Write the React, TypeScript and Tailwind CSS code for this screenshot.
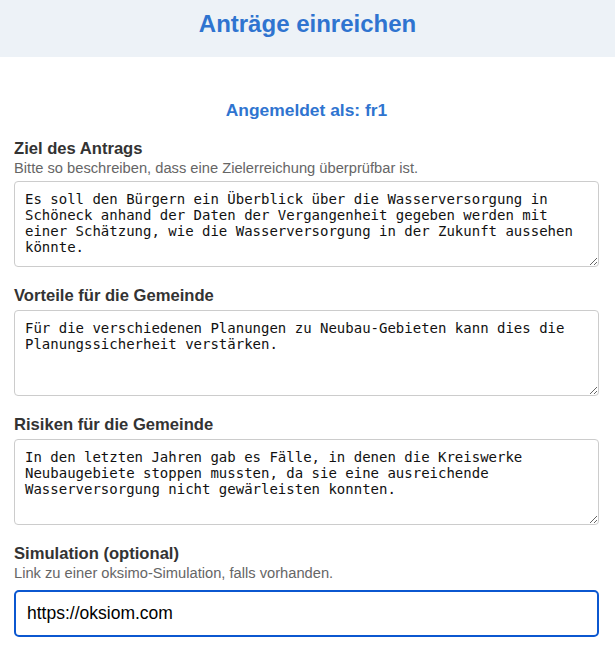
import { useState } from 'react';

const mono = { fontFamily: '"DejaVu Sans Mono", monospace' };

interface FieldProps {
    label: string;
    hint?: string;
    value: string;
    onChange: (v: string) => void;
}

function TextField({ label, hint, value, onChange }: FieldProps) {
    return (
        <div className="mt-[18px] first:mt-0">
            <label className="block text-[16.6px] font-bold leading-[21px] text-[#333]">{label}</label>
            {hint && <p className="text-[14.7px] leading-[18px] text-[#666]">{hint}</p>}
            <textarea
                className="mt-[4px] block h-[86px] w-full rounded-[4px] border border-[#ccc] px-[10px] pt-[9px] pb-[6px] text-[14px] leading-[16px] text-[#111] outline-none"
                style={mono}
                spellCheck={false}
                value={value}
                onChange={(e) => onChange(e.target.value)}
            />
        </div>
    );
}

export default function App() {
    const [ziel, setZiel] = useState(
        'Es soll den Bürgern ein Überblick über die Wasserversorgung in Schöneck anhand der Daten der Vergangenheit gegeben werden mit einer Schätzung, wie die Wasserversorgung in der Zukunft aussehen könnte.'
    );
    const [vorteile, setVorteile] = useState(
        'Für die verschiedenen Planungen zu Neubau-Gebieten kann dies die Planungssicherheit verstärken.'
    );
    const [risiken, setRisiken] = useState(
        'In den letzten Jahren gab es Fälle, in denen die Kreiswerke Neubaugebiete stoppen mussten, da sie eine ausreichende Wasserversorgung nicht gewärleisten konnten.'
    );
    const [link, setLink] = useState('https://oksiom.com');

    return (
        <div className="min-h-screen bg-white" style={{ fontFamily: '"Liberation Sans", Arial, sans-serif' }}>
            {/* Header */}
            <div className="h-[57px] bg-[#edf2f7] pt-[9px] text-center">
                <h1 className="text-[24px] font-bold leading-[29px] text-[#2f74d0]">Anträge einreichen</h1>
            </div>

            <div className="pl-[14px] pr-[16px] pt-[42px]">
                <p className="text-center text-[17.4px] font-bold leading-[22px] text-[#2f74d0]">Angemeldet als: fr1</p>

                <div className="mt-[17px]">
                    <TextField
                        label="Ziel des Antrags"
                        hint="Bitte so beschreiben, dass eine Zielerreichung überprüfbar ist."
                        value={ziel}
                        onChange={setZiel}
                    />
                    <TextField label="Vorteile für die Gemeinde" value={vorteile} onChange={setVorteile} />
                    <TextField label="Risiken für die Gemeinde" value={risiken} onChange={setRisiken} />

                    {/* Simulation link */}
                    <div className="mt-[18px]">
                        <label className="block text-[16.6px] font-bold leading-[21px] text-[#333]">Simulation (optional)</label>
                        <p className="text-[14.7px] leading-[18px] text-[#666]">Link zu einer oksimo-Simulation, falls vorhanden.</p>
                        <input
                            type="text"
                            spellCheck={false}
                            className="mt-[8px] block h-[47px] w-full rounded-[5px] border-2 border-[#0b57d0] px-[11px] text-[17.5px] text-black outline-none"
                            value={link}
                            onChange={(e) => setLink(e.target.value)}
                        />
                    </div>
                </div>
            </div>
        </div>
    );
}
